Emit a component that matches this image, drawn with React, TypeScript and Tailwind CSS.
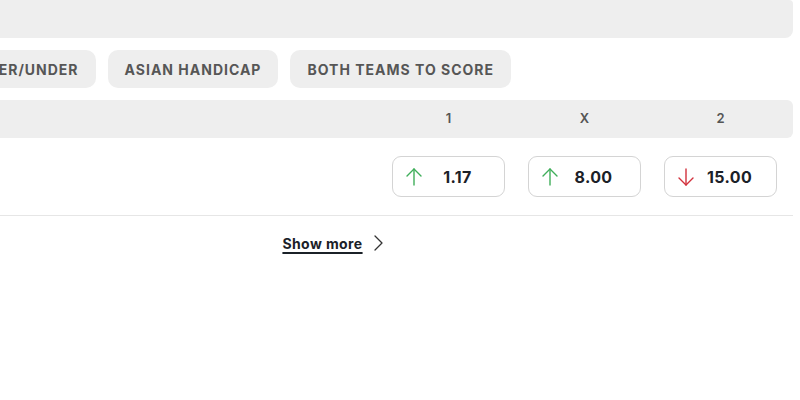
import React from "react";

const ArrowUp = () => (
  <svg width="18" height="20" viewBox="0 0 18 20" fill="none" stroke="#3fae5a" strokeWidth="1.4" strokeLinecap="round" strokeLinejoin="round">
    <path d="M9 18V2" />
    <path d="M2 9l7-7 7 7" />
  </svg>
);

const ArrowDown = () => (
  <svg width="18" height="20" viewBox="0 0 18 20" fill="none" stroke="#d2313d" strokeWidth="1.4" strokeLinecap="round" strokeLinejoin="round">
    <path d="M9 2v16" />
    <path d="M2 11l7 7 7-7" />
  </svg>
);

const Odd = ({ value, up }: { value: string; up: boolean }) => (
  <button className="w-[113px] h-[41px] rounded-[9px] border border-[#d4d4d4] bg-white flex items-center pl-[12px] pr-[12px]">
    {up ? <ArrowUp /> : <ArrowDown />}
    <span className="flex-1 text-center text-[16px] font-bold text-[#1b2128] tracking-[0.4px]">{value}</span>
  </button>
);

const Tab = ({ label }: { label: string }) => (
  <div className="h-[38px] px-[17px] rounded-[10px] bg-[#eeeeee] flex items-center text-[14px] font-bold text-[#565656] tracking-[1px] whitespace-nowrap">
    {label}
  </div>
);

export default function App() {
  const font = { fontFamily: "Inter, 'Noto Sans', sans-serif" };
  return (
    <div className="w-[800px] h-[400px] bg-white overflow-hidden" style={font}>
      <div className="w-[922px] ml-[-129px]">
        <div className="h-[38px] bg-[#eeeeee] rounded-br-[8px] rounded-tr-[4px] w-[922px]" />
        <div className="mt-[12px] flex gap-[12px] ml-[88px]">
          <Tab label="OVER/UNDER" />
          <Tab label="ASIAN HANDICAP" />
          <Tab label="BOTH TEAMS TO SCORE" />
        </div>
        <div className="mt-[12px] h-[38px] bg-[#eeeeee] rounded-r-[6px] flex justify-end items-center pr-[16px] gap-[23px]">
          <div className="w-[113px] text-center text-[13px] font-semibold text-[#555]">1</div>
          <div className="w-[113px] text-center text-[13px] font-semibold text-[#555]">X</div>
          <div className="w-[113px] text-center text-[13px] font-semibold text-[#555]">2</div>
        </div>
        <div className="h-[78px] border-b border-[#e6e6e6] flex justify-end items-center pr-[16px] gap-[23px]">
          <Odd value="1.17" up />
          <Odd value="8.00" up />
          <Odd value="15.00" up={false} />
        </div>
        <div className="flex justify-center items-center mt-[17px] h-[20px] pl-[2px]">
          <span className="text-[14px] font-bold text-[#1b2128] tracking-[0.4px] underline underline-offset-[3px] decoration-[1.5px]">Show more</span>
          <svg className="ml-[9px]" width="12" height="18" viewBox="0 0 12 18" fill="none" stroke="#333" strokeWidth="1.3" strokeLinecap="round" strokeLinejoin="round">
            <path d="M3 2l7 7-7 7" />
          </svg>
        </div>
      </div>
    </div>
  );
}
